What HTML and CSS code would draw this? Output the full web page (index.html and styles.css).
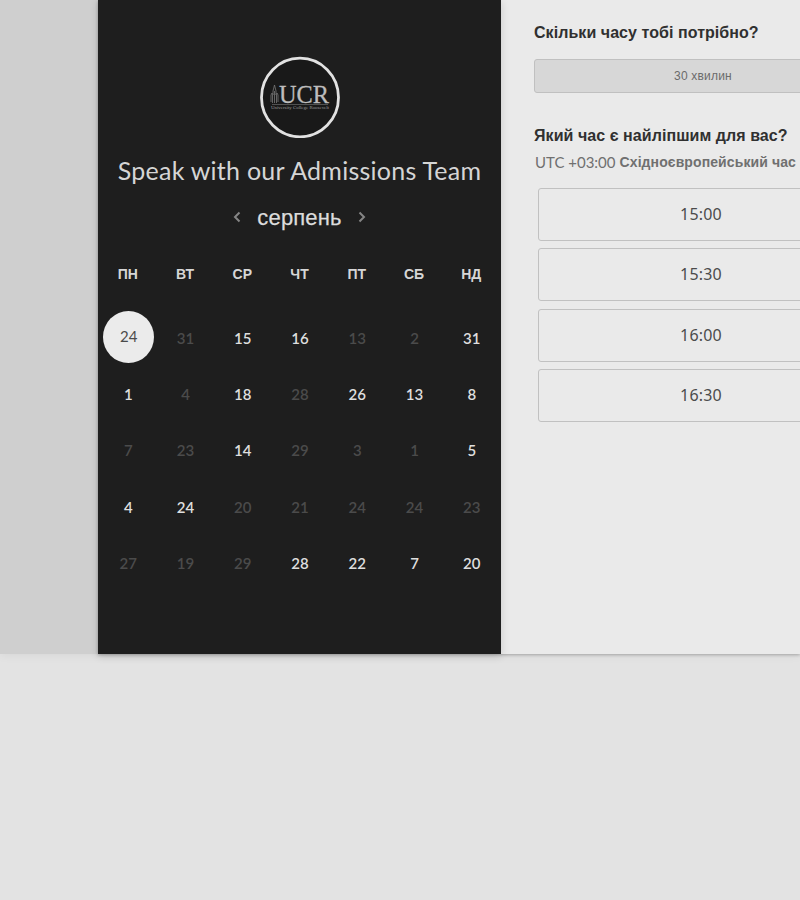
FILE: index.html
```html
<!DOCTYPE html>
<html lang="uk">
<head>
<meta charset="utf-8">
<title>Speak with our Admissions Team</title>
<link rel="stylesheet" href="styles.css">
</head>
<body>
<div class="backdrop">
<main class="scheduler">
  <section class="calendar">
    <svg class="logo" viewBox="0 0 80 82" width="80" height="82">
      <ellipse cx="40" cy="41.500" rx="38.500" ry="39.300" fill="#191919" stroke="#e2e2e2" stroke-width="2.800"/>
      <path d="M11 46v-7l1-2 1 2v-4l1.500-6 1.500 6v4l1-2 1 2v7M12.500 39v8M14.500 35v12M16.500 39v8" fill="none" stroke="#777" stroke-width=".8"/>
      <text class="logo-name" x="19" y="47" textLength="50" lengthAdjust="spacingAndGlyphs">UCR</text>
      <path d="M12 48.500H68" stroke="#777" stroke-width=".6"/>
      <text class="logo-caption" x="11" y="52.500" textLength="58" lengthAdjust="spacingAndGlyphs">University College Roosevelt</text>
    </svg>
    <h1 class="title">Speak with our Admissions Team</h1>
    <div class="month">
      <svg class="arrow" viewBox="0 0 8 12" width="8" height="12"><path d="M6.500 1.500 2 6l4.500 4.500"/></svg>
      <span class="month-name">серпень</span>
      <svg class="arrow" viewBox="0 0 8 12" width="8" height="12"><path d="M1.500 1.500 6 6l-4.500 4.500"/></svg>
    </div>
    <div class="weekdays"><span>ПН</span><span>ВТ</span><span>СР</span><span>ЧТ</span><span>ПТ</span><span>СБ</span><span>НД</span></div>
    <div class="days">
      <span class="selected">24</span><span class="off">31</span><span>15</span><span>16</span><span class="off">13</span><span class="off">2</span><span>31</span>
      <span>1</span><span class="off">4</span><span>18</span><span class="off">28</span><span>26</span><span>13</span><span>8</span>
      <span class="off">7</span><span class="off">23</span><span>14</span><span class="off">29</span><span class="off">3</span><span class="off">1</span><span>5</span>
      <span>4</span><span>24</span><span class="off">20</span><span class="off">21</span><span class="off">24</span><span class="off">24</span><span class="off">23</span>
      <span class="off">27</span><span class="off">19</span><span class="off">29</span><span>28</span><span>22</span><span>7</span><span>20</span>
    </div>
  </section>
  <section class="booking">
    <h2 class="question">Скільки часу тобі потрібно?</h2>
    <div class="duration"><span>30 хвилин</span></div>
    <h2 class="question question-time">Який час є найліпшим для вас?</h2>
    <p class="timezone"><span class="offset">UTC +03:00</span><b class="zone">Східноєвропейський час</b></p>
    <div class="slots">
      <div class="slot">15:00</div>
      <div class="slot">15:30</div>
      <div class="slot">16:00</div>
      <div class="slot">16:30</div>
    </div>
  </section>
</main>
</div>
</body>
</html>
```
FILE: styles.css
```css
* { box-sizing: border-box; }
body {
  margin: 0;
  height: 900px;
  overflow: hidden;
  background: #e3e3e3;
  font-family: "Liberation Sans", sans-serif;
}
h1, h2, p { margin: 0; font-weight: normal; white-space: nowrap; }
.backdrop {
  height: 654px;
  padding-left: 98px;
  background: #cfcfcf;
  box-shadow: 0 1px 10px rgba(0, 0, 0, .06);
}
.scheduler {
  display: flex;
  width: 100%;
  height: 654px;
  background: #eaeaea;
  box-shadow: 0 1px 3px rgba(0, 0, 0, .25);
}
.calendar {
  display: flex;
  flex: none;
  flex-direction: column;
  align-items: center;
  width: 403px;
  padding-top: 56px;
  background: #1e1e1e;
  box-shadow: 0 2px 8px rgba(0, 0, 0, .15);
}
.logo { flex: none; }
.logo-name { font: 26px "Liberation Serif", serif; fill: #bdbdbd; stroke: #bdbdbd; stroke-width: .3; }
.logo-caption { font: 5px "Liberation Serif", serif; fill: #999; }
.title {
  margin-top: 17px;
  height: 30px;
  line-height: 30px;
  font-family: Lato, sans-serif;
  font-size: 25px;
  letter-spacing: .250px;
  color: #d5d5d5;
}
.month {
  display: flex;
  align-items: center;
  justify-content: center;
  gap: 16px;
  height: 30px;
  margin-top: 18px;
}
.month-name { font-size: 22px; line-height: 30px; letter-spacing: .15px; color: #dcdcdc; -webkit-text-stroke: .25px #dcdcdc; }
.arrow { position: relative; top: -1px; fill: none; stroke: #858585; stroke-width: 2; }
.weekdays, .days {
  display: grid;
  grid-template-columns: repeat(7, 57.250px);
  justify-items: center;
  align-items: center;
}
.weekdays { height: 20px; margin-top: 31px; font-size: 14px; font-weight: bold; color: #d6d6d6; }
.days {
  grid-auto-rows: 56.200px;
  margin-top: 26px;
  font-family: Lato, sans-serif;
  font-size: 15px;
  font-weight: 600;
  color: #dedede;
}
.days span { padding-left: 1px; }
.days .off { color: #4b4b4b; }
.days .selected {
  width: 51px;
  height: 52px;
  margin: -2px 0 0 2px;
  padding: 0;
  border-radius: 50%;
  background: #ebebeb;
  color: #4b4b4b;
  font-weight: 400;
  font-size: 15px;
  line-height: 50px;
  text-align: center;
}
.booking { flex: 1; min-width: 0; padding: 22px 0 0 33px; overflow: hidden; }
.question { height: 22px; line-height: 22px; font-size: 16px; letter-spacing: .06px; font-weight: bold; color: #303030; }
.duration {
  display: flex;
  align-items: center;
  justify-content: center;
  width: 338px;
  height: 34px;
  margin-top: 15px;
  border: 1px solid #c0c0c0;
  border-radius: 3px;
  background: #d7d7d7;
  color: #6b6b6b;
  font-size: 12px;
  letter-spacing: .2px;
}
.question-time { margin-top: 32px; }
.timezone {
  display: flex;
  align-items: center;
  gap: 4px;
  height: 20px;
  margin-top: 5px;
  padding-left: 1px;
  color: #707070;
}
.offset { font-family: Lato, sans-serif; font-size: 15px; }
.zone { font-size: 14px; letter-spacing: .1px; }
.slots { display: grid; gap: 7.400px; margin: 16px 0 0 4px; }
.slot {
  width: 326px;
  height: 53px;
  border: 1px solid #c1c1c1;
  border-radius: 3px;
  font-family: "Noto Sans", sans-serif;
  font-size: 16px;
  letter-spacing: .2px;
  line-height: 51px;
  text-align: center;
  color: #4c4c4c;
}
```
